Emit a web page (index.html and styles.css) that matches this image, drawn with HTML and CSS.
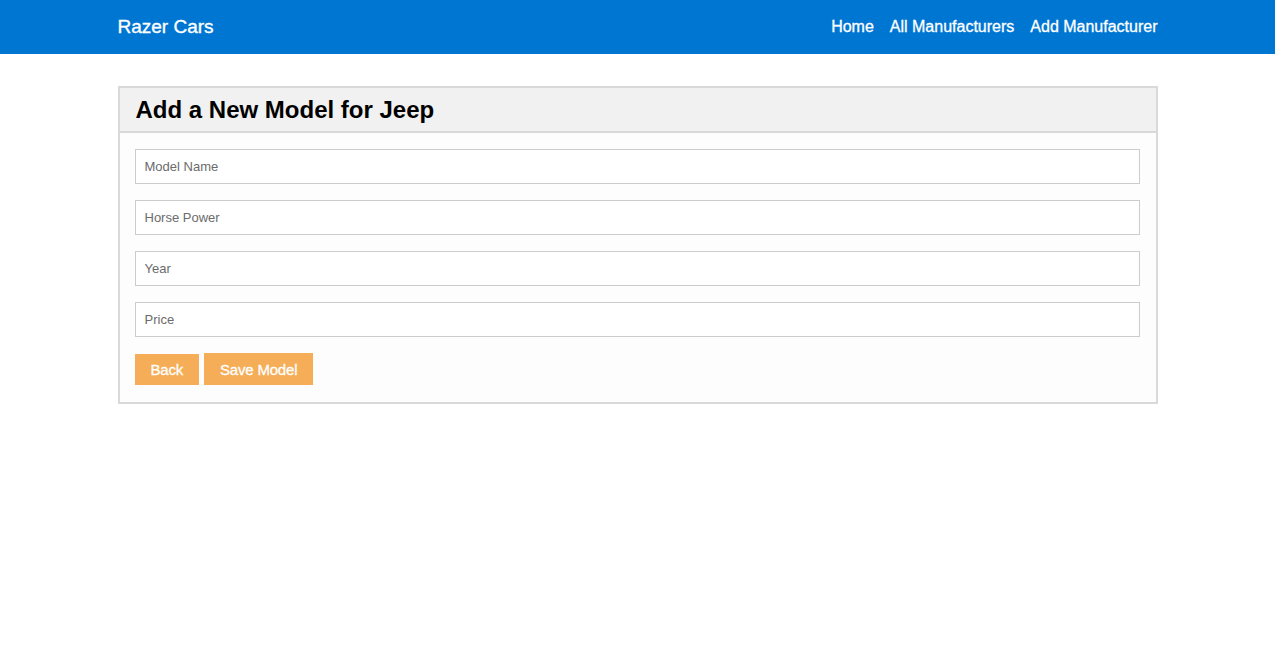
FILE: index.html
```html
<!DOCTYPE html>
<html>
<head>
<meta charset="utf-8">
<title>Razer Cars</title>
<link rel="stylesheet" href="styles.css">
</head>
<body>
<header class="navbar">
  <div class="container nav-inner">
    <a class="brand" href="#">Razer Cars</a>
    <nav class="nav-links">
      <a href="#">Home</a>
      <a href="#">All Manufacturers</a>
      <a href="#">Add Manufacturer</a>
    </nav>
  </div>
</header>
<main class="container main">
  <section class="panel">
    <div class="panel-header">
      <h1>Add a New Model for Jeep</h1>
    </div>
    <form class="panel-body">
      <input class="field" type="text" placeholder="Model Name">
      <input class="field" type="text" placeholder="Horse Power">
      <input class="field" type="text" placeholder="Year">
      <input class="field" type="text" placeholder="Price">
      <div class="actions">
        <button type="button" class="btn btn-back">Back</button>
        <button type="button" class="btn">Save Model</button>
      </div>
    </form>
  </section>
</main>
</body>
</html>
```
FILE: styles.css
```css
* { box-sizing: border-box; }
body {
  margin: 0;
  font-family: "Liberation Sans", Arial, Helvetica, sans-serif;
  background: #fff;
  color: #000;
}
.container {
  width: 1040px;
  margin: 0 auto;
}
.navbar {
  background: #0076d3;
  height: 54px;
}
.nav-inner {
  display: flex;
  align-items: center;
  justify-content: space-between;
  height: 54px;
}
.brand {
  color: #fff;
  text-decoration: none;
  font-size: 19px;
  -webkit-text-stroke: 0.35px #fff;
}
.nav-links {
  display: flex;
  gap: 16px;
  margin-top: -1px;
}
.nav-links a {
  color: #fff;
  text-decoration: none;
  font-size: 16px;
  -webkit-text-stroke: 0.3px #fff;
}
.main {
  padding-top: 32px;
}
.panel {
  border: 2px solid #d9d9d9;
  background: #fdfdfd;
}
.panel-header {
  background: #f1f1f1;
  border-bottom: 2px solid #d9d9d9;
  height: 45px;
  padding: 0 16px;
  display: flex;
  align-items: center;
}
.panel-header h1 {
  margin: 0;
  font-size: 24px;
  font-weight: bold;
}
.panel-body {
  padding: 16px 16px 17px 15px;
  display: flex;
  flex-direction: column;
  gap: 16px;
}
.field {
  height: 35px;
  width: 100%;
  border: 1px solid #cccccc;
  background: #fff;
  padding: 0 9px;
  font-family: "Liberation Sans", Arial, sans-serif;
  font-size: 13px;
  color: #333;
  outline: none;
}
.field::placeholder {
  color: #6b6b6b;
}
.actions {
  display: flex;
  gap: 5px;
  align-items: flex-end;
}
.btn {
  background: #f5ad58;
  border: none;
  color: #fff;
  font-family: "Liberation Sans", Arial, sans-serif;
  font-size: 15px;
  height: 32px;
  padding: 0 16px;
  cursor: pointer;
  letter-spacing: -0.2px;
  -webkit-text-stroke: 0.3px #fff;
}
.btn-back {
  height: 31px;
}
```
